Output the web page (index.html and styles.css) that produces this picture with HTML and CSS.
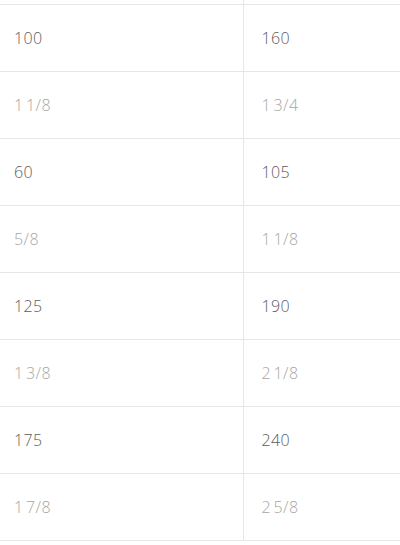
FILE: index.html
```html
<!DOCTYPE html>
<html>
<head>
<meta charset="utf-8">
<link rel="stylesheet" href="styles.css">
</head>
<body>
<table class="sizes">
  <tbody>
    <tr class="top"><td class="c1"></td><td class="c2"></td></tr>
    <tr class="main"><td class="c1">100</td><td class="c2">160</td></tr>
    <tr class="sub"><td class="c1">1 1/8</td><td class="c2">1 3/4</td></tr>
    <tr class="main"><td class="c1">60</td><td class="c2">105</td></tr>
    <tr class="sub"><td class="c1">5/8</td><td class="c2">1 1/8</td></tr>
    <tr class="main"><td class="c1">125</td><td class="c2">190</td></tr>
    <tr class="sub"><td class="c1">1 3/8</td><td class="c2">2 1/8</td></tr>
    <tr class="main"><td class="c1">175</td><td class="c2">240</td></tr>
    <tr class="sub"><td class="c1">1 7/8</td><td class="c2">2 5/8</td></tr>
  </tbody>
</table>
</body>
</html>
```
FILE: styles.css
```css
html, body {
  margin: 0;
  padding: 0;
  background: #fff;
}
.sizes {
  border-collapse: collapse;
  width: 400px;
  table-layout: fixed;
  font-family: "Open Sans", "Noto Sans", sans-serif;
  font-size: 16px;
  font-weight: 300;
  letter-spacing: 0.4px;
  word-spacing: -2px;
}
.sizes td {
  height: 66px;
  padding: 0;
  border-bottom: 1px solid #e6e6e6;
  vertical-align: middle;
  line-height: 20px;
}
.sizes .c1 {
  width: 243px;
  padding-left: 14px;
  box-sizing: border-box;
  border-right: 1px solid #e6e6e6;
}
.sizes .c2 {
  padding-left: 18px;
}
.sizes .top td {
  height: 4px;
}
.main td {
  color: #5c5c5c;
}
.sub td {
  color: #a6a6a6;
}
```
